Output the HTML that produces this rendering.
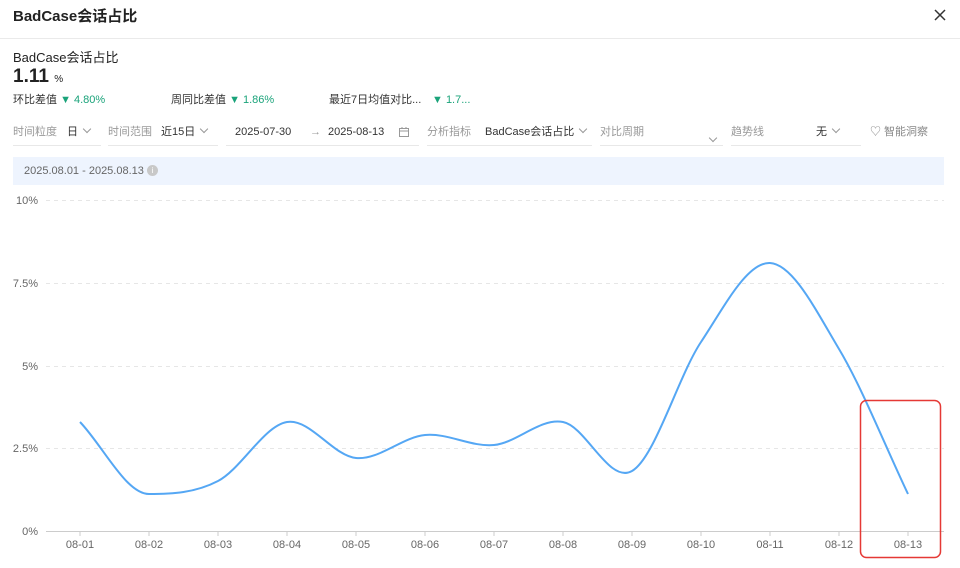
<!DOCTYPE html>
<html><head><meta charset="utf-8"><style>
*{margin:0;padding:0;box-sizing:border-box}
body{width:960px;height:568px;background:#fff;font-family:"Liberation Sans","Noto Sans CJK SC",sans-serif;color:#333;position:relative;overflow:hidden}
.a{position:absolute;white-space:nowrap;line-height:14px}
.g{color:#999;font-size:11px}
.v{color:#333;font-size:11px}
.t{color:#1aa37a;font-size:11px}
.u{position:absolute;height:1px;background:#e8e8e8;top:145px}
.ch{display:inline-block;width:6px;height:6px;border-right:1px solid #999;border-bottom:1px solid #999;transform:rotate(45deg);margin-left:6px;position:relative;top:-3px}
.f{top:125px}
</style></head><body>
<div class="a" style="left:13px;top:8px;font-size:15px;font-weight:bold;color:#222;line-height:18px">BadCase会话占比</div>
<svg class="a" style="left:934px;top:9px" width="12" height="12"><path d="M1 1L11 11M11 1L1 11" stroke="#333" stroke-width="1.5"/></svg>
<div class="a" style="left:0;top:38px;width:960px;height:1px;background:#eaeaea"></div>
<div class="a" style="left:13px;top:50px;font-size:13px;color:#222;line-height:16px">BadCase会话占比</div>
<div class="a" style="left:13px;top:67px;font-size:19px;font-weight:bold;color:#222;line-height:20px">1.11 <span style="font-size:10px;font-weight:normal">%</span></div>
<div class="a v" style="left:13px;top:93px">环比差值 <span class="t">▼ 4.80%</span></div>
<div class="a v" style="left:171px;top:93px">周同比差值 <span class="t">▼ 1.86%</span></div>
<div class="a v" style="left:329px;top:93px">最近7日均值对比...</div>
<div class="a t" style="left:432px;top:93px">▼ 1.7...</div>

<div class="a g f" style="left:13px">时间粒度</div>
<div class="a v f" style="left:67px">日<span class="ch"></span></div>
<div class="u" style="left:13px;width:88px"></div>
<div class="a g f" style="left:108px">时间范围</div>
<div class="a v f" style="left:161px">近15日<span class="ch"></span></div>
<div class="u" style="left:108px;width:110px"></div>
<div class="a v f" style="left:235px">2025-07-30</div>
<div class="a g f" style="left:310px">→</div>
<div class="a v f" style="left:328px">2025-08-13</div>
<svg class="a" style="left:399px;top:127px" width="10" height="10"><rect x="0.5" y="1.5" width="9" height="8" fill="none" stroke="#999"/><path d="M0.5 4h9M3 0v2M7 0v2" stroke="#999"/></svg>
<div class="u" style="left:226px;width:193px"></div>
<div class="a g f" style="left:427px">分析指标</div>
<div class="a v f" style="left:485px">BadCase会话占比<span class="ch"></span></div>
<div class="u" style="left:427px;width:165px"></div>
<div class="a g f" style="left:600px">对比周期</div>
<span class="a ch" style="left:704px;top:128px;line-height:0"></span>
<div class="u" style="left:600px;width:123px"></div>
<div class="a g f" style="left:731px">趋势线</div>
<div class="a v f" style="left:816px">无<span class="ch"></span></div>
<div class="u" style="left:731px;width:130px"></div>
<div class="a g f" style="left:870px;color:#888">♡ 智能洞察</div>

<div class="a" style="left:13px;top:157px;width:931px;height:28px;background:#eef4fe"></div>
<div class="a" style="left:24px;top:164px;font-size:11px;color:#666">2025.08.01 - 2025.08.13</div>
<div class="a" style="left:147px;top:165px;width:11px;height:11px;border-radius:50%;background:#c8c8c8;color:#fff;font-size:8px;text-align:center;line-height:11px">i</div>

<svg class="a" style="left:0;top:0" width="960" height="568">
<g stroke="#e6e6e6" stroke-dasharray="4,4"><path d="M46 200.5H944M46 283.5H944M46 366.5H944M46 448.5H944"/></g>
<path d="M46 531.5H944" stroke="#ccc"/>
<g stroke="#ccc"><path d="M80 531v5M149 531v5M218 531v5M287 531v5M356 531v5M425 531v5M494 531v5M563 531v5M632 531v5M701 531v5M770 531v5M839 531v5M908 531v5"/></g>
<g font-size="11" fill="#666" text-anchor="end" font-family="Liberation Sans,sans-serif">
<text x="38" y="204">10%</text><text x="38" y="287">7.5%</text><text x="38" y="370">5%</text><text x="38" y="452">2.5%</text><text x="38" y="535">0%</text></g>
<g font-size="11" fill="#666" text-anchor="middle" font-family="Liberation Sans,sans-serif">
<text x="80" y="548">08-01</text><text x="149" y="548">08-02</text><text x="218" y="548">08-03</text><text x="287" y="548">08-04</text><text x="356" y="548">08-05</text><text x="425" y="548">08-06</text><text x="494" y="548">08-07</text><text x="563" y="548">08-08</text><text x="632" y="548">08-09</text><text x="701" y="548">08-10</text><text x="770" y="548">08-11</text><text x="839" y="548">08-12</text><text x="908" y="548">08-13</text></g>
<path d="M80,422 C103,446 126,494 149,494 C172,494 195,493 218,481 C241,469 264,425.8 287,422 C310,418.2 333,455.8 356,458 C379,460.2 402,437.2 425,435 C448,432.8 471,447.2 494,445 C517,442.8 540,417.7 563,422 C586,426.3 609,484.3 632,471 C655,457.7 678,376.7 701,342 C724,307.3 747,261.8 770,263 C793,264.2 816,310.5 839,349 C862,387.5 885,445.7 908,494" fill="none" stroke="#55a7f4" stroke-width="2"/>
<rect x="860.5" y="400.5" width="80" height="157" rx="6" fill="none" stroke="#e53935" stroke-width="1.5"/>
</svg>
</body></html>
